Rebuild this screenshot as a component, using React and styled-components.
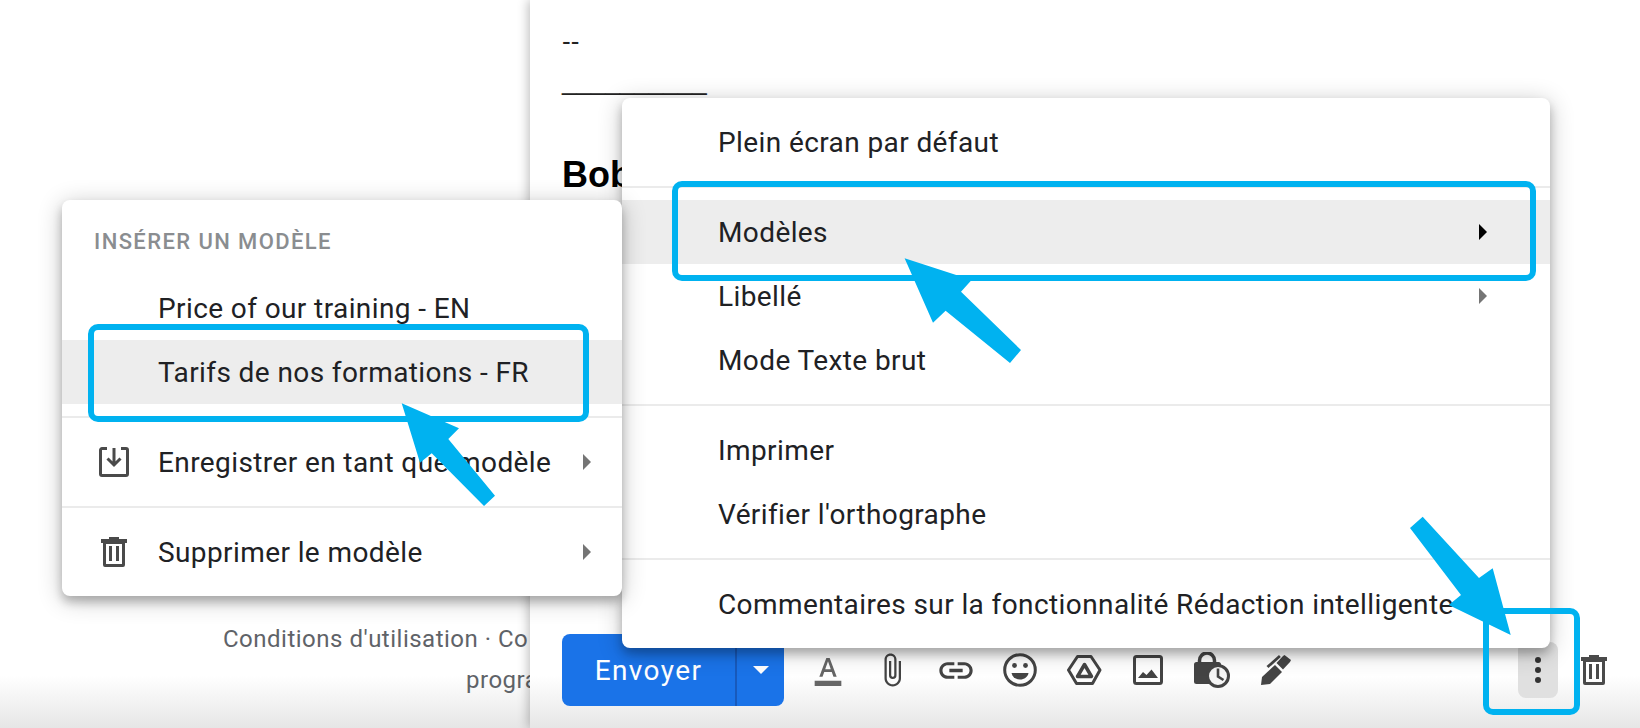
import styled, { createGlobalStyle, css } from "styled-components";
import { MdAttachFile, MdFormatColorText, MdLink } from "react-icons/md";

const GlobalStyle = createGlobalStyle`
  html, body {
    margin: 0;
    padding: 0;
    background: #fff;
  }
  * {
    box-sizing: border-box;
  }
`;

const bottomFade = css`
  background: linear-gradient(#fff 0, #fff 676px, #e6e6e6 728px);
`;

const Page = styled.div`
  position: relative;
  display: flex;
  width: 1640px;
  height: 728px;
  overflow: hidden;
  font-family: Roboto, "Liberation Sans", sans-serif;
  color: #202124;
`;

const Backdrop = styled.aside`
  ${bottomFade}
  width: 530px;
  height: 100%;
  overflow: hidden;
  display: flex;
  flex-direction: column;
  padding: 619px 0 0 223px;
  color: #5f6368;
  font-size: 24px;
  line-height: 41px;
  letter-spacing: 0.5px;
  white-space: nowrap;
`;

const FooterLine = styled.div`
  margin-left: ${(p) => p.$indent || 0}px;
`;

const Compose = styled.main`
  ${bottomFade}
  flex: 1;
  display: flex;
  flex-direction: column;
  box-shadow: -2px 0 10px rgba(0, 0, 0, 0.25);
  z-index: 1;
`;

const Body = styled.div`
  flex: 1;
  padding: 25px 32px 0;
  font-family: "Liberation Sans", Arial, sans-serif;
  font-size: 26px;
  line-height: 32px;
  color: #222;
`;

const Line = styled.div`
  margin-bottom: ${(p) => p.$gap || 0}px;
`;

const Signature = styled.div`
  font-size: 36px;
  line-height: 42px;
  font-weight: 700;
  color: #000;
`;

const Toolbar = styled.div`
  display: flex;
  align-items: center;
  gap: 24px;
  height: 72px;
  margin-bottom: 22px;
  padding: 0 26px 0 32px;
`;

const SendGroup = styled.div`
  display: flex;
  width: 222px;
  height: 72px;
  border-radius: 8px;
  overflow: hidden;
  background: #1a73e8;
  color: #fff;
`;

const SendLabel = styled.div`
  width: 173px;
  display: flex;
  align-items: center;
  justify-content: center;
  font-size: 28px;
  font-weight: 400;
  letter-spacing: 1.4px;
`;

const SendMore = styled.div`
  flex: 1;
  display: flex;
  align-items: center;
  justify-content: center;
  border-left: 2px solid #185abc;

  &::after {
    content: "";
    border-left: 8px solid transparent;
    border-right: 8px solid transparent;
    border-top: 8px solid #fff;
  }
`;

const ToolIcon = styled.div`
  width: 40px;
  height: 40px;
  flex: none;
  display: flex;
  align-items: center;
  justify-content: center;
  color: #444;
`;

const MoreButton = styled.div`
  width: 40px;
  height: 56px;
  margin-left: auto;
  margin-right: -8px;
  border-radius: 8px;
  background: #e0e0e0;
  display: flex;
  flex-direction: column;
  align-items: center;
  justify-content: center;
  gap: 4px;
`;

const Dot = styled.span`
  width: 6px;
  height: 6px;
  border-radius: 50%;
  background: #333;
`;

const Menu = styled.div`
  position: absolute;
  padding: 12px 0;
  background: #fff;
  border-radius: 8px;
  box-shadow: 0 6px 10px rgba(0, 0, 0, 0.22), 0 4px 24px rgba(0, 0, 0, 0.24);
  font-size: 28px;
  letter-spacing: 0.4px;
`;

const TemplateMenu = styled(Menu)`
  left: 62px;
  top: 200px;
  width: 560px;
  height: 396px;
  z-index: 3;
`;

const OptionsMenu = styled(Menu)`
  left: 622px;
  top: 98px;
  width: 928px;
  height: 550px;
  z-index: 2;
`;

const MenuTitle = styled.div`
  height: 64px;
  padding: 16px 0 0 32px;
  font-size: 22px;
  line-height: 28px;
  font-weight: 500;
  letter-spacing: 1.4px;
  color: #8a8d90;
`;

const Row = styled.div`
  display: flex;
  align-items: center;
  height: 64px;
  padding-left: ${(p) => p.$inset}px;
  white-space: nowrap;
  background: ${(p) => (p.$active ? "#ededed" : "transparent")};
`;

const RowIcon = styled.div`
  width: 96px;
  margin-left: -96px;
  padding-left: 37px;
  display: flex;
  color: #444;
`;

const Caret = styled.span`
  margin-left: auto;
  margin-right: ${(p) => p.$right}px;
  border-top: 8px solid transparent;
  border-bottom: 8px solid transparent;
  border-left: 8px solid ${(p) => (p.$active ? "#000" : "#757575")};
`;

const Separator = styled.div`
  height: 2px;
  margin: 12px 0;
  background: #ebebeb;
`;

const Callout = styled.div`
  position: absolute;
  left: ${(p) => p.$x}px;
  top: ${(p) => p.$y}px;
  width: ${(p) => p.$w}px;
  height: ${(p) => p.$h}px;
  border: 6px solid #00b2f0;
  border-radius: 10px;
  z-index: 4;
`;

const ArrowLayer = styled.svg`
  position: absolute;
  left: 0;
  top: 0;
  z-index: 5;
`;

function SaveIcon() {
  return (
    <svg width="30" height="30" viewBox="0 0 30 30" fill="none" stroke="#4a4a4a" strokeWidth="3">
      <path d="M8 1.5H3A1.5 1.5 0 0 0 1.5 3v24A1.5 1.5 0 0 0 3 28.5h24a1.5 1.5 0 0 0 1.5-1.5V3A1.5 1.5 0 0 0 27 1.5h-5" />
      <path d="M15 1v16M8.5 11.5 15 18l6.500-6.500" />
    </svg>
  );
}

function TrashIcon() {
  return (
    <svg width="30" height="30" viewBox="0 0 30 30" fill="#4a4a4a">
      <path d="M10 0h10v2h8v4H2V2h8z" />
      <path fillRule="evenodd" d="M4 4h22v24a2 2 0 0 1-2 2H6a2 2 0 0 1-2-2zm3 3v20h16V7z" />
      <path d="M10 9h3v15h-3zM17 9h3v15h-3z" />
    </svg>
  );
}

function SmileIcon() {
  return (
    <svg width="34" height="34" viewBox="0 0 34 34">
      <circle cx="17" cy="17" r="15.300" fill="none" stroke="#444" strokeWidth="3" />
      <circle cx="11.500" cy="12.500" r="2.400" fill="#444" />
      <circle cx="22.500" cy="12.500" r="2.400" fill="#444" />
      <path d="M8.500 20h17c-.8 4-4.200 6.500-8.500 6.500S9.300 24 8.500 20z" fill="#444" />
    </svg>
  );
}

function DriveIcon() {
  return (
    <svg width="35" height="30" viewBox="0 0 35 30" fill="none" stroke="#444" strokeWidth="3" strokeLinejoin="round">
      <path d="M10.500 1.500h13.500L33 15l-7.500 13.500h-16L1.500 15z" />
      <path d="M17.500 9.500 24.500 21.500h-14z" strokeWidth="3.500" />
    </svg>
  );
}

function ImageIcon() {
  return (
    <svg width="30" height="30" viewBox="0 0 30 30">
      <rect x="1.500" y="1.500" width="27" height="27" rx="2" fill="none" stroke="#444" strokeWidth="3" />
      <path d="M5 23 10 17l3.500 3L18.500 14.500 25 23z" fill="#444" />
    </svg>
  );
}

function LockClockIcon() {
  return (
    <svg width="36" height="36" viewBox="0 0 36 36">
      <path d="M5.500 10V8.500a7.500 7.500 0 0 1 15 0V10" fill="none" stroke="#444" strokeWidth="3.500" />
      <rect x="0" y="10" width="27" height="22" rx="2.500" fill="#444" />
      <circle cx="24" cy="24" r="10.500" fill="#f6f6f6" stroke="#444" strokeWidth="3" />
      <path d="M24 16.500V24.500l5.500 3.500" fill="none" stroke="#444" strokeWidth="2.600" />
    </svg>
  );
}

function PenIcon() {
  return (
    <svg width="30" height="30" viewBox="0 0 30 30" fill="#444">
      <path d="M0 30l1-8 13-12 7 7-12 12z" />
      <path d="M15.500 8 22 1l1.500-1L30 5l-1 2-7 7.500z" />
      <path d="M5.500 11 18 0l1.800 2L7.500 13z" />
    </svg>
  );
}

export default function App() {
  return (
    <Page>
      <GlobalStyle />
      <Backdrop>
        <FooterLine>Conditions d'utilisation · Co</FooterLine>
        <FooterLine $indent={243}>programme</FooterLine>
      </Backdrop>

      <Compose>
        <Body>
          <Line $gap={8}>--</Line>
          <Line $gap={57}>__________</Line>
          <Signature>Bob</Signature>
        </Body>
        <Toolbar>
          <SendGroup>
            <SendLabel>Envoyer</SendLabel>
            <SendMore />
          </SendGroup>
          <ToolIcon>
            <MdFormatColorText size={32} color="#666" />
          </ToolIcon>
          <ToolIcon>
            <MdAttachFile size={36} />
          </ToolIcon>
          <ToolIcon>
            <MdLink size={41} />
          </ToolIcon>
          <ToolIcon>
            <SmileIcon />
          </ToolIcon>
          <ToolIcon>
            <DriveIcon />
          </ToolIcon>
          <ToolIcon>
            <ImageIcon />
          </ToolIcon>
          <ToolIcon>
            <LockClockIcon />
          </ToolIcon>
          <ToolIcon>
            <PenIcon />
          </ToolIcon>
          <MoreButton>
            <Dot />
            <Dot />
            <Dot />
          </MoreButton>
          <ToolIcon>
            <TrashIcon />
          </ToolIcon>
        </Toolbar>
      </Compose>

      <TemplateMenu>
        <MenuTitle>INSÉRER UN MODÈLE</MenuTitle>
        <Row $inset={96}>Price of our training - EN</Row>
        <Row $inset={96} $active>
          Tarifs de nos formations - FR
        </Row>
        <Separator />
        <Row $inset={96}>
          <RowIcon>
            <SaveIcon />
          </RowIcon>
          Enregistrer en tant que modèle
          <Caret $right={31} />
        </Row>
        <Separator />
        <Row $inset={96}>
          <RowIcon>
            <TrashIcon />
          </RowIcon>
          Supprimer le modèle
          <Caret $right={31} />
        </Row>
      </TemplateMenu>

      <OptionsMenu>
        <Row $inset={96}>Plein écran par défaut</Row>
        <Separator />
        <Row $inset={96} $active>
          Modèles
          <Caret $right={63} $active />
        </Row>
        <Row $inset={96}>
          Libellé
          <Caret $right={63} />
        </Row>
        <Row $inset={96}>Mode Texte brut</Row>
        <Separator />
        <Row $inset={96}>Imprimer</Row>
        <Row $inset={96}>Vérifier l'orthographe</Row>
        <Separator />
        <Row $inset={96}>Commentaires sur la fonctionnalité Rédaction intelligente</Row>
      </OptionsMenu>

      <Callout $x={88} $y={324} $w={501} $h={98} />
      <Callout $x={672} $y={181} $w={864} $h={100} />
      <Callout $x={1483} $y={608} $w={97} $h={107} />

      <ArrowLayer width="1640" height="728" viewBox="0 0 1640 728" fill="#00b2f0">
        <path d="M401.700 403.300 459 428.300 448.300 439 495 495.700 484 506 431.700 453.300 420 462.700z" />
        <path d="M904.600 258.300 971.600 280 961 291.700 1021 350 1010 363 945.600 310.700 933 322.700z" />
        <path d="M1510.700 635 1492.700 568.300 1479 578 1422.700 516.700 1410 528 1461 595 1448.700 605z" />
      </ArrowLayer>
    </Page>
  );
}
